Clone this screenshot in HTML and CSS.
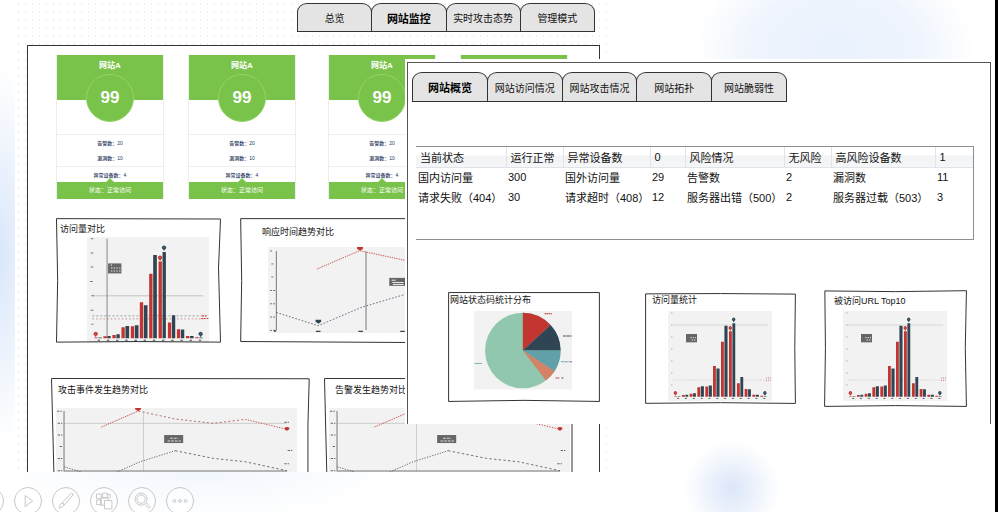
FILE: index.html
```html
<!DOCTYPE html>
<html lang="zh-CN">
<head>
<meta charset="utf-8">
<title>网站监控</title>
<link rel="stylesheet" href="styles.css">
</head>
<body>
<svg class="defs" aria-hidden="true">
  <symbol id="pin" viewBox="0 0 12 16" overflow="visible"><path d="M6 16 3 11A6 6 0 1 1 9 11Z"/><path d="M4 5h4M6 4v4" stroke="#fff" stroke-opacity=".5"/></symbol>
  <symbol id="bars" viewBox="0 0 365 318" overflow="visible">
    <path fill="#c23531" d="M22 301h10v2H22zM49 297h10v6H49zM76 293h10v10H76zM103 270h10v33H103zM131 267h10v36H131zM158 195h10v108H158zM186 110h10v193H186zM214 73h10v230H214zM242 256h10v47H242zM269 276h10v27H269zM296 296h10v7H296zM324 300h10v3H324z"/>
    <path fill="#2f4554" d="M34 301h10v2H34zM61 296h10v7H61zM88 291h10v12H88zM115 266h11v37H115zM143 264h11v39H143zM170 204h11v99H170zM198 54h11v249H198zM226 45h10v258H226zM254 234h10v69H254zM281 277h10v26H281zM308 296h11v7H308zM336 301h10v2H336z"/>
    <use href="#pin" x="20" y="284" width="12" height="16" fill="#c23531"/>
    <use href="#pin" x="212" y="56" width="13" height="16" fill="#c23531"/>
    <use href="#pin" x="224" y="26" width="13" height="16" fill="#2f4554"/>
    <use href="#pin" x="334" y="284" width="12" height="16" fill="#2f4554"/>
    <path stroke="#444" stroke-width="3" stroke-dasharray="7 20.5" d="M32 309H350"/>
  </symbol>
  <symbol id="bars-small" viewBox="0 0 312 270">
    <path fill="#f2f2f2" d="M0 0h312v270H0z"/>
    <path stroke="#ccc" stroke-width="2" d="M14 42H300"/>
    <path stroke="#c8b4b4" stroke-width="2" stroke-dasharray="4 5" d="M16 207H294"/>
    <path stroke="#777" stroke-width="5" stroke-dasharray="2 34" d="M11 5V240"/>
    <path stroke="#c23531" stroke-width="2" stroke-dasharray="3 3" d="M294 201h16M294 208h14"/>
    <use href="#bars" width="312" height="272" y="-2"/>
    <path fill="#666" d="M54 69h33v25H54z"/>
    <path stroke="#ddd" stroke-width="3" stroke-dasharray="4 3" d="M67 80h17M71 87h13"/>
  </symbol>
  <symbol id="trend" viewBox="0 0 722 192">
    <path fill="#f2f2f2" d="M0 0h722v192H0z"/>
    <path stroke="#bbb" stroke-width="2" d="M24 46H692M262 11V189"/>
    <path fill="none" stroke="#777" stroke-width="3" d="M24 9V189H692"/>
    <path stroke="#666" stroke-width="3" stroke-dasharray="7 3 4 60" d="M3 10h16M5 46h14M5 81h14M11 115h8M5 151h14M5 188h14M684 43h22M694 127h22M684 167h22"/>
    <g fill="none" stroke-width="2.5" stroke-dasharray="5 5">
      <path stroke="#c23531" stroke-dasharray="4 3" d="M136 57 247 9"/>
      <path stroke="#a85050" stroke-dasharray="6 7" d="M247 9 357 33 472 46 567 34"/>
      <path stroke="#c23531" stroke-dasharray="4 4" d="M567 34 692 64"/>
      <path stroke="#555" stroke-dasharray="4 4" d="M24 176 77 192M182 192 252 161 357 128"/>
      <path stroke="#555" stroke-dasharray="7 7" d="M357 128 472 151 567 161 692 188"/>
    </g>
    <path fill="#c23531" d="M237 0h18v4l-9 6-9-6zM684 60q8-6 16 0-3 8-8 8t-8-8z"/>
    <path fill="#666" d="M324 81h57v24H324z"/>
    <path stroke="#ddd" stroke-width="3" stroke-dasharray="8 3" d="M342 91h24M334 99h40"/>
  </symbol>
</svg>

<main class="page">
  <div class="slide">
    <nav class="tabs" aria-label="主导航">
      <button type="button">总览</button>
      <button type="button" class="active">网站监控</button>
      <button type="button">实时攻击态势</button>
      <button type="button">管理模式</button>
    </nav>

    <section class="monitor">
      <div class="cards">
        <article class="card">
          <h2>网站A</h2><div class="score">99</div>
          <p>告警数：20</p><p>漏洞数：10</p><p class="ruled">异常设备数：4</p>
          <footer>状态：正常访问</footer>
        </article>
        <article class="card">
          <h2>网站A</h2><div class="score">99</div>
          <p>告警数：20</p><p>漏洞数：10</p><p class="ruled">异常设备数：4</p>
          <footer>状态：正常访问</footer>
        </article>
        <article class="card third">
          <h2>网站A</h2><div class="score">99</div>
          <p>告警数：20</p><p>漏洞数：10</p><p class="ruled">异常设备数：4</p>
          <footer>状态：正常访问</footer>
        </article>
        <article class="card"></article>
      </div>

      <div class="row compare">
        <figure class="visits">
          <svg class="frame" viewBox="0 0 100 100" preserveAspectRatio="none"><path d="M.3.5 99.7.8 98.5 40 99.7 99.3 50 98.8.3 99.3 1 50Z"/></svg>
          <figcaption>访问量对比</figcaption>
          <svg class="chart" viewBox="0 0 365 318">
            <path fill="#f2f2f2" d="M0 0h365v318H0z"/>
            <path stroke="#aaa" stroke-width="2" d="M16 176H348"/>
            <path stroke="#888" stroke-width="3" d="M60 5V303"/>
            <path stroke="#777" stroke-width="2" stroke-dasharray="6 6" d="M16 236H350"/>
            <path stroke="#b66" stroke-width="2" stroke-dasharray="5 6" d="M16 245H350"/>
            <path stroke="#777" stroke-width="3" d="M11 5h8M11 48h8M11 90h8M9 133h8M13 176h8M11 219h8M13 261h6"/>
            <path stroke="#c23531" stroke-width="3" stroke-dasharray="5 3" d="M342 244h22M345 236h16"/>
            <use href="#bars" width="365" height="318"/>
            <path fill="#666" d="M63 79h40v30H63z"/>
            <path stroke="#eee" stroke-width="3" stroke-dasharray="4 4" d="M71 84h4M72 93h28M72 102h28"/>
          </svg>
        </figure>
        <figure class="response">
          <svg class="frame" viewBox="0 0 100 100" preserveAspectRatio="none"><path d="M.2.5H99.8V99.4L50 99.6.2 98.8.5 50Z"/></svg>
          <figcaption>响应时间趋势对比</figcaption>
          <svg class="chart" viewBox="0 0 900 259">
            <path fill="#f2f2f2" d="M0 0h900v259H0z"/>
            <path stroke="#777" stroke-width="3" d="M25 12V252M295 14V250"/>
            <path stroke="#777" stroke-width="3" stroke-dasharray="6 3" d="M6 12h7M10 51h6M10 90h6M6 131h16M6 171h16M6 211h16M6 251h16"/>
            <path stroke="#444" stroke-width="4" d="M18 253h6M144 254h14M272 254h14M398 254h14"/>
            <g fill="none" stroke-width="2.5" stroke-dasharray="5 5">
              <path stroke="#c23531" stroke-dasharray="4 3" d="M148 66 276 11 430 44"/>
              <path stroke="#557" d="M25 197 151 237 283 181 408 144 530 110"/>
            </g>
            <path fill="#c23531" d="M268 0h18v5l-9 6-9-6z"/>
            <path fill="#2f4554" d="M143 219h17v6l-8 6-9-6z"/>
            <path fill="#666" d="M365 93h60v24h-60z"/>
            <path stroke="#eee" stroke-width="3" d="M372 100h12M374 107h34M376 113h32"/>
          </svg>
        </figure>
      </div>

      <div class="row trends">
        <figure class="attacks">
          <svg class="frame" viewBox="0 0 100 100" preserveAspectRatio="none"><path d="M1.2 110 .2.5 99.7.8 99.2 50 99.2 110"/></svg>
          <figcaption>攻击事件发生趋势对比</figcaption>
          <svg class="chart" viewBox="0 0 722 192"><use href="#trend"/></svg>
        </figure>
        <figure class="alarms">
          <svg class="frame" viewBox="0 0 100 100" preserveAspectRatio="none"><path d="M1.2 110 .2.5 99.7.8 99.2 50 99.2 110"/></svg>
          <figcaption>告警发生趋势对比</figcaption>
          <svg class="chart" viewBox="0 0 722 192"><use href="#trend"/></svg>
        </figure>
      </div>
    </section>
  </div>

  <section class="detail">
    <div class="sheet">
      <nav class="tabs" aria-label="网站详情">
        <button type="button" class="active">网站概览</button>
        <button type="button">网站访问情况</button>
        <button type="button">网站攻击情况</button>
        <button type="button">网站拓扑</button>
        <button type="button">网站脆弱性</button>
      </nav>

      <div class="grid-box">
        <table>
          <colgroup><col class="c1"><col class="c2"><col class="c3"><col class="c4"><col class="c5"><col class="c6"><col class="c7"><col class="c8"></colgroup>
          <thead>
            <tr><th>当前状态</th><th>运行正常</th><th>异常设备数</th><th>0</th><th>风险情况</th><th>无风险</th><th>高风险设备数</th><th>1</th></tr>
          </thead>
          <tbody>
            <tr><td>国内访问量</td><td>300</td><td>国外访问量</td><td>29</td><td>告警数</td><td>2</td><td>漏洞数</td><td>11</td></tr>
            <tr><td>请求失败（404）</td><td>30</td><td>请求超时（408）</td><td>12</td><td>服务器出错（500）</td><td>2</td><td>服务器过载（503）</td><td>3</td></tr>
          </tbody>
        </table>
      </div>

      <div class="stats">
        <figure class="codes">
          <svg class="frame" viewBox="0 0 100 100" preserveAspectRatio="none"><path d="M.4.5H99.6V99.5Q50 97.5.4 99.5Z"/></svg>
          <figcaption>网站状态码统计分布</figcaption>
          <svg class="chart" viewBox="0 0 293 235">
            <path fill="#f2f2f2" d="M0 0h293v235H0z"/>
            <circle cx="146" cy="118" r="113" fill="#91c7ae"/>
            <path fill="#c23531" d="M146 118V5A113 113 0 0 1 229 42Z"/>
            <path fill="#2f4554" d="M146 118 229 42A113 113 0 0 1 259 118Z"/>
            <path fill="#61a0a8" d="M146 118H259A113 113 0 0 1 241 180Z"/>
            <path fill="#d48265" d="M146 118 241 180A113 113 0 0 1 215 208Z"/>
            <g stroke-width="3" stroke-dasharray="6 1 4 1">
              <path stroke="#c23531" d="M211 8h22M244 200h12"/><path stroke="#2f4554" d="M266 75h26M262 200h5"/>
              <path stroke="#61a0a8" d="M260 152h24"/><path stroke="#7a9" d="M2 157h22"/><path stroke="#555" d="M286 152h6"/>
            </g>
          </svg>
        </figure>
        <figure class="totals">
          <svg class="frame" viewBox="0 0 100 100" preserveAspectRatio="none"><path d="M.4.8 50 .5 99.6 1 99.2 50 99.6 99.5 50 98.8.4 99.4Z"/></svg>
          <figcaption>访问量统计</figcaption>
          <svg class="chart" viewBox="0 0 312 270"><use href="#bars-small"/></svg>
        </figure>
        <figure class="urls">
          <svg class="frame" viewBox="0 0 100 100" preserveAspectRatio="none"><path d="M.6.8 50 1.4 99.6.6 98.8 50 99.6 99.5 50 98.8.4 99.5 1 50Z"/></svg>
          <figcaption>被访问URL Top10</figcaption>
          <svg class="chart" viewBox="0 0 312 270"><use href="#bars-small"/></svg>
        </figure>
      </div>
    </div>
  </section>

  <div class="controls">
    <button type="button" aria-label="上一页"></button>
    <button type="button" aria-label="播放"><svg viewBox="0 0 28 28"><path d="M11 8v12l8-6z"/></svg></button>
    <button type="button" aria-label="画笔"><svg viewBox="0 0 28 28"><path d="M20 5.500q2 0 1.500 2L12.500 18l-2.500-2.500zM9.500 16l2.500 2.500q-2 3-5.500 3 .5-1 1-3 .5-2 2-2.500z"/></svg></button>
    <button type="button" aria-label="幻灯片"><svg viewBox="0 0 28 28"><path d="M6 6.500h5v5H6zM12.500 5.500h5v5h-5zM6 13h5v5H6zM17.500 7h3v4"/><path d="M10.500 10.500h8v8h-8z"/><path d="M14.500 13.500h8v9h-8z" class="solid"/></svg></button>
    <button type="button" aria-label="缩放"><svg viewBox="0 0 28 28"><circle cx="13" cy="12" r="6.500"/><circle cx="13" cy="12" r="4.500"/><path d="m17 17.500 4.500 4.500 1.500-1.500-4.500-4.500"/></svg></button>
    <button type="button" aria-label="更多"><svg viewBox="0 0 28 28"><circle cx="8" cy="14" r="1.500"/><circle cx="14" cy="14" r="1.500"/><circle cx="20" cy="14" r="1.500"/></svg></button>
  </div>
</main>
</body>
</html>
```

FILE: styles.css
```css
* { box-sizing: border-box; }

body {
  margin: 0;
  background: #fff;
  color: #111;
  font-family: "Liberation Sans", "Noto Sans CJK SC", sans-serif;
  font-size: 11px;
}

.defs { position: absolute; width: 0; height: 0; }
h2, p, figure { margin: 0; }

.page {
  position: relative;
  min-height: 100vh;
  max-height: 100vh;
  overflow: hidden;
  border-right: 3px solid #000;
  background:
    radial-gradient(ellipse 48px 48px at 732px 489px, #dbe6f8, #fff0),
    radial-gradient(ellipse 140px 100px at 835px 50px, #e9f2fd 0, #eff4fd 60%, #fff0 100%),
    radial-gradient(ellipse 200px 60px at 200px 462px, #f0f5fd, #fff0),
    radial-gradient(ellipse 50px 190px at 0 255px, #d9e6fa, #fff0);
}

.slide {
  margin-left: 15px;
  width: 59.5%;
  padding-top: 3px;
  background: radial-gradient(circle, #ececec 1px, #fff0 1px) 0 0 / 7px 8px, #fff;
}

/* Tabs */
.tabs { display: grid; grid-auto-flow: column; grid-auto-columns: 1fr; }
.slide .tabs { width: 297px; margin-left: 282px; }

.tabs button {
  height: 29px;
  padding: 0;
  margin-right: -1px;
  border: 1px solid #333;
  border-radius: 10px 10px 0 0 / 9px 9px 0 0;
  background: #e4e4e4;
  color: #111;
  font: inherit;
  font-size: 10px;
  white-space: nowrap;
}
.tabs .active { font-size: 11px; font-weight: 700; color: #000; }

/* Background monitor panel */
.monitor {
  height: 427px;
  margin: 13px 7px 0 12px;
  padding-top: 9px;
  overflow: hidden;
  border: 1px solid #333;
  border-bottom: 0;
  background: #fff;
}

.cards {
  display: grid;
  grid-template-columns: repeat(4, 108px);
  column-gap: 24px;
  padding-left: 28px;
}
.cards .third { margin-left: 8px; margin-right: -8px; }
.cards .third ~ .card { margin-left: 8px; margin-right: -8px; }

.card {
  border: 1px solid #eee;
  border-width: 0 1px;
  background: linear-gradient(#7ac34a 45px, #fff 45px);
  text-align: center;
  color: #25355c;
  font-size: 5px;
}
.card h2 { padding-top: 5px; font-size: 8px; line-height: 12px; color: #fff; }
.score {
  width: 48px;
  height: 48px;
  margin: 2px auto 12px;
  border: 1px solid #92d468;
  border-radius: 50%;
  background: #7ac34a;
  color: #fff;
  font-size: 17px;
  font-weight: 700;
  line-height: 46px;
}
.card p { height: 16px; line-height: 16px; font-weight: 500; }
.score + p, .ruled { border-top: 1px solid #eee; }
.card footer {
  display: flow-root;
  height: 17px;
  background: #7ac34a;
  color: #fff;
  font-size: 6px;
  line-height: 17px;
}
.card footer::before {
  content: "";
  display: block;
  width: 8px;
  height: 4px;
  margin: -4px auto 0;
  background: #7ac34a;
  clip-path: polygon(50% 0, 100% 100%, 0 100%);
}

/* Sketched chart boxes */
figure { position: relative; }
figcaption { font-size: 9px; line-height: 12px; white-space: nowrap; }
.chart { display: block; }
.frame { position: absolute; inset: 0; width: 100%; height: 100%; }
.frame path { fill: none; stroke: #333; stroke-width: 1px; vector-effect: non-scaling-stroke; }

.row { display: grid; }
.compare { grid-template-columns: 165px 335px; column-gap: 19px; margin: 19px 0 0 28px; }
.compare figure { height: 125px; }
.trends { grid-template-columns: 259px 250px; column-gap: 14px; margin: 35px 0 0 23px; }
.trends figure { height: 94px; }

.visits figcaption { padding: 5px 0 0 4px; }
.visits .chart { width: 122px; margin: 2px 0 0 31px; }
.response figcaption { padding: 8px 0 0 22px; }
.response .chart { width: 299px; margin: 9px 0 0 28px; }
.attacks figcaption { padding: 6px 0 0 7px; }
.alarms figcaption { padding: 6px 0 0 11px; }
.trends .chart { width: 241px; margin: 12px 0 0 5px; }

/* Foreground detail sheet */
.detail {
  position: absolute;
  top: 59px;
  left: 405px;
  right: 3px;
  padding: 3px 1px 0 2px;
  background: #fff;
}
.sheet {
  height: 362px;
  padding: 9px 16px 0 4px;
  border: 1px solid #555;
  border-bottom: 0;
}
.sheet .tabs { width: 374px; }
.sheet .tabs button { height: 30px; }

.grid-box {
  height: 94px;
  margin: 44px 0 0 4px;
  border: 1px solid #8a8f96;
  border-left: 0;
}
table { width: 100%; table-layout: fixed; border-collapse: collapse; }
.c1 { width: 90px; } .c2 { width: 57px; } .c3 { width: 87px; } .c4 { width: 35px; }
.c5 { width: 99px; } .c6 { width: 47px; } .c7 { width: 104px; }
th, td { padding: 0 0 0 2px; text-align: left; font-weight: 400; white-space: nowrap; }
th {
  height: 20px;
  padding-left: 4px;
  border: 1px solid #e0e3e8;
  border-width: 0 1px 1px 0;
  background: linear-gradient(#fff 40%, #f1f3f5 45%, #f5f6f8);
}
th:last-child { border-right: 0; }
td { height: 20px; color: #111; }

.stats {
  display: grid;
  grid-template-columns: 152px 151px 143px;
  column-gap: 45px;
  align-items: start;
  margin: 50px 0 0 36px;
}
.codes { height: 110px; margin-top: 2px; }
.codes figcaption { padding: 2px 0 0 2px; }
.codes .chart { width: 98px; margin: 5px 0 0 26px; }
.totals { height: 111px; margin-top: 3px; }
.totals figcaption { padding: 1px 0 0 7px; }
.totals .chart { width: 104px; margin: 5px 0 0 23px; }
.urls { height: 117px; margin-left: -17px; margin-right: 17px; }
.urls figcaption { padding: 5px 0 0 10px; }
.urls .chart { width: 104px; margin: 4px 0 0 19px; }

/* Presenter controls */
.controls { display: flex; gap: 10px; margin: 15px 0 0 -24px; }
.controls button {
  flex: none;
  width: 28px;
  height: 28px;
  padding: 0;
  border: 1px solid #c8c8c8;
  border-radius: 50%;
  background: #fff8;
}
.controls svg { display: block; width: 26px; height: 26px; fill: none; stroke: #c4c4c4; }
.controls .solid { fill: #fff; }
```
